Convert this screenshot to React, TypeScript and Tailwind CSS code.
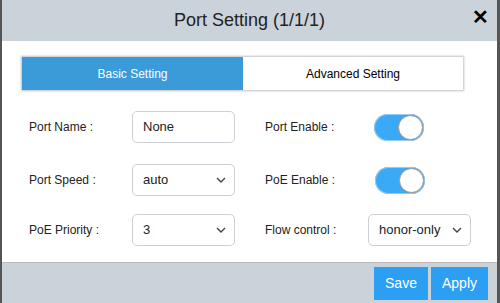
import React from 'react';

function Toggle() {
  return (
    <div className="relative h-[27px] w-[50px] rounded-full bg-[#3aaaf8] shadow-[inset_0_0_0_1px_#9cc9ea]">
      <div className="absolute right-[1px] top-[1px] h-[25px] w-[25px] rounded-full border border-[#999] bg-white shadow-[0_0_1px_#888]" />
    </div>
  );
}

function Select({ value, width }: { value: string; width: string }) {
  return (
    <div className={`flex h-[32px] ${width} items-center justify-between rounded-[5px] border border-[#ccd0d6] bg-white pl-[10px] pr-[8px] text-[13px] text-[#222]`}>
      <span>{value}</span>
      <svg width="10" height="6" viewBox="0 0 10 6" fill="none" stroke="#444" strokeWidth="1.4">
        <path d="M1 1l4 4 4-4" />
      </svg>
    </div>
  );
}

export default function App() {
  return (
    <div className="flex h-[303px] w-[500px] flex-col border-l-2 border-r-[3px] border-[#555] bg-white font-['Liberation_Sans',Arial,sans-serif]">
      {/* Header */}
      <div className="relative flex h-[41px] shrink-0 items-center justify-center bg-[#cad2da]">
        <span className="text-[18px] text-[#222]">Port Setting (1/1/1)</span>
        <span className="absolute right-[8px] top-[2px] text-[20px] font-bold text-black">✕</span>
      </div>

      {/* Tabs */}
      <div className="mt-[16px] flex h-[33px] ml-[20px] w-[441px] shadow-[0_0_2px_1px_rgba(0,0,0,0.25)]">
        <div className="flex w-[221px] items-center justify-center bg-[#3a9bd8] text-[12px] text-white">Basic Setting</div>
        <div className="flex flex-1 items-center justify-center bg-white text-[12px] text-black">Advanced Setting</div>
      </div>

      {/* Form */}
      <div className="mt-[21px] flex flex-col pl-[27px] text-[12px] text-[#222]">
        <div className="flex h-[32px] items-center">
          <div className="flex w-[236px] items-center">
            <span className="w-[103px]">Port Name :</span>
            <div className="flex h-[32px] w-[103px] items-center rounded-[5px] border border-[#ccd0d6] pl-[10px] text-[13px]">None</div>
          </div>
          <span className="w-[109px]">Port Enable :</span>
          <Toggle />
        </div>

        <div className="mt-[21px] flex h-[32px] items-center">
          <div className="flex w-[236px] items-center">
            <span className="w-[103px]">Port Speed :</span>
            <Select value="auto" width="w-[103px]" />
          </div>
          <span className="w-[110px]">PoE Enable :</span>
          <Toggle />
        </div>

        <div className="mt-[18px] flex h-[32px] items-center">
          <div className="flex w-[236px] items-center">
            <span className="w-[103px]">PoE Priority :</span>
            <Select value="3" width="w-[103px]" />
          </div>
          <span className="w-[103px]">Flow control :</span>
          <Select value="honor-only" width="w-[103px]" />
        </div>
      </div>

      {/* Footer */}
      <div className="mt-auto flex h-[41px] items-center justify-end gap-[3px] border-t border-[#bbb] bg-[#cad2da] pr-[9px] pt-[1px]">
        <div className="flex h-[33px] w-[54px] items-center justify-center bg-[#2d9ff2] text-[14px] text-white">Save</div>
        <div className="flex h-[33px] w-[57px] items-center justify-center bg-[#2d9ff2] text-[14px] text-white">Apply</div>
      </div>
    </div>
  );
}
